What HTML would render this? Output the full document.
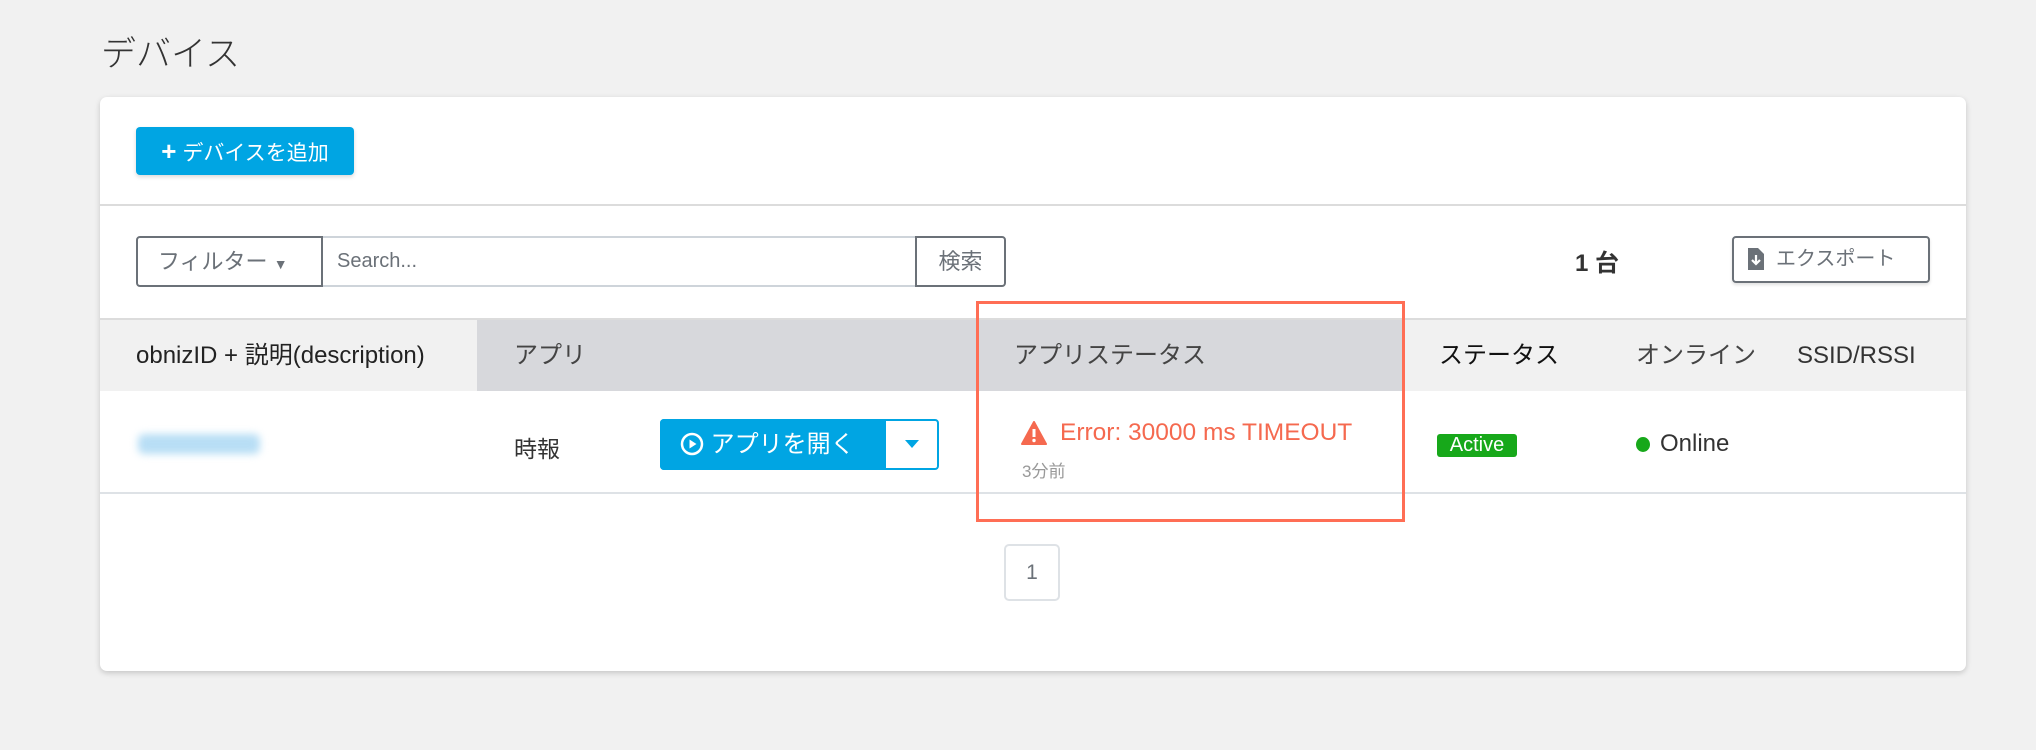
<!DOCTYPE html>
<html><head><meta charset="utf-8"><style>
*{box-sizing:border-box;margin:0;padding:0}
body{width:2036px;height:750px;background:#f1f1f1;font-family:"Liberation Sans","Noto Sans CJK JP",sans-serif;color:#333;position:relative;overflow:hidden}
.abs{position:absolute}
.title{left:101px;top:26px;font-size:35px;color:#333;font-weight:300}
.card{left:100px;top:97px;width:1866px;height:574px;background:#fff;border-radius:7px;box-shadow:0 2px 6px rgba(0,0,0,.18)}
.btnadd{left:136px;top:127px;width:218px;height:48px;background:#00a5e3;border-radius:4px;color:#fff;font-size:21px;line-height:48px;text-align:center;box-shadow:0 2px 4px rgba(0,0,0,.15)}
.hr{left:100px;width:1866px;height:2px;background:#dcdcdc}
.filt{left:136px;top:236px;width:187px;height:51px;border:2px solid #6b7178;border-radius:4px 0 0 4px;font-size:22px;line-height:47px;padding-left:20px;color:#6b7178}
.inp{left:323px;top:236px;width:592px;height:51px;border:2px solid #ced4da;border-left:none;border-right:none;font-size:20px;line-height:47px;padding-left:14px;color:#6b7178}
.srch{left:915px;top:236px;width:91px;height:51px;border:2px solid #6b7178;border-radius:0 4px 4px 0;font-size:22px;line-height:47px;text-align:center;color:#6b7178}
.cnt{left:1575px;top:243px;font-size:24px;font-weight:bold;color:#333}
.exp{left:1732px;top:236px;width:198px;height:47px;border:2px solid #6b7178;border-radius:4px;font-size:20px;line-height:43px;padding-left:42px;color:#6b7178;box-shadow:0 2px 3px rgba(0,0,0,.12)}
.th{top:320px;height:71px;font-size:24px;line-height:71px}
.td{font-size:23px}
</style></head><body>
<div class="abs title">デバイス</div>
<div class="abs card"></div>
<div class="abs btnadd"><b style="font-size:26px">+</b> デバイスを追加</div>
<div class="abs hr" style="top:204px"></div>
<div class="abs filt">フィルター <span style="font-size:14px">▼</span></div>
<div class="abs inp">Search...</div>
<div class="abs srch">検索</div>
<div class="abs cnt">1 台</div>
<div class="abs exp"><svg class="abs" style="left:14px;top:10px" width="16" height="22" viewBox="0 0 16 22"><path d="M0 0H10L16 6V22H0Z" fill="#6b7178"/><path d="M8 7V16M4 12L8 16L12 12" stroke="#fff" stroke-width="2.2" fill="none"/></svg>エクスポート</div>
<div class="abs hr" style="top:318px"></div>
<div class="abs th" style="left:100px;width:377px;background:#f1f1f1;padding-left:36px;color:#222">obnizID + 説明(description)</div>
<div class="abs th" style="left:477px;width:925px;background:#d7d8dc"></div>
<div class="abs th" style="left:1402px;width:564px;background:#f1f1f1"></div>
<div class="abs th" style="left:514px;color:#444">アプリ</div>
<div class="abs th" style="left:1014px;color:#444">アプリステータス</div>
<div class="abs th" style="left:1439px;color:#111">ステータス</div>
<div class="abs th" style="left:1636px;color:#444">オンライン</div>
<div class="abs th" style="left:1797px;color:#333">SSID/RSSI</div>
<div class="abs" style="left:138px;top:434px;width:122px;height:20px;background:#b8def5;filter:blur(4px);border-radius:6px"></div>
<div class="abs td" style="left:514px;top:430px">時報</div>
<div class="abs" style="left:660px;top:419px;width:279px;height:51px;border:2px solid #00a5e3;border-radius:4px;background:#fff"></div>
<div class="abs" style="left:660px;top:419px;width:226px;height:51px;background:#00a5e3;border-radius:4px 0 0 4px;color:#fff;font-size:24px;line-height:51px;padding-left:20px">
<svg style="vertical-align:-4px" width="24" height="24" viewBox="0 0 24 24"><circle cx="12" cy="12" r="10" stroke="#fff" stroke-width="2.5" fill="none"/><path d="M9.5 7.5L16.5 12L9.5 16.5Z" fill="#fff"/></svg> アプリを開く</div>
<div class="abs" style="left:905px;top:440px;width:0;height:0;border-left:7px solid transparent;border-right:7px solid transparent;border-top:8px solid #00a5e3"></div>
<svg class="abs" style="left:1021px;top:421px" width="26" height="24" viewBox="0 0 26 24"><path d="M13 1L25 23H1Z" fill="#f5694f" stroke="#f5694f" stroke-width="2" stroke-linejoin="round"/><path d="M13 8V16" stroke="#fff" stroke-width="3"/><circle cx="13" cy="19.5" r="1.7" fill="#fff"/></svg>
<div class="abs" style="left:1060px;top:419px;font-size:24.5px;color:#f5694f">Error: 30000 ms TIMEOUT</div>
<div class="abs" style="left:1022px;top:457px;font-size:17px;color:#999">3分前</div>
<div class="abs" style="left:1437px;top:434px;width:80px;height:23px;background:#17a81a;border-radius:3px;color:#fff;font-size:20px;line-height:23px;text-align:center">Active</div>
<div class="abs" style="left:1636px;top:437px;width:14px;height:15px;border-radius:50%;background:#17a81a"></div>
<div class="abs" style="left:1660px;top:430px;font-size:24px">Online</div>
<div class="abs hr" style="top:492px;background:#dee2e6"></div>
<div class="abs" style="left:1004px;top:544px;width:56px;height:57px;border:2px solid #dee2e6;border-radius:5px;text-align:center;line-height:53px;font-size:21px;color:#6b7178">1</div>
<div class="abs" style="left:976px;top:301px;width:429px;height:221px;border:3px solid #ff6e55"></div>
</body></html>
